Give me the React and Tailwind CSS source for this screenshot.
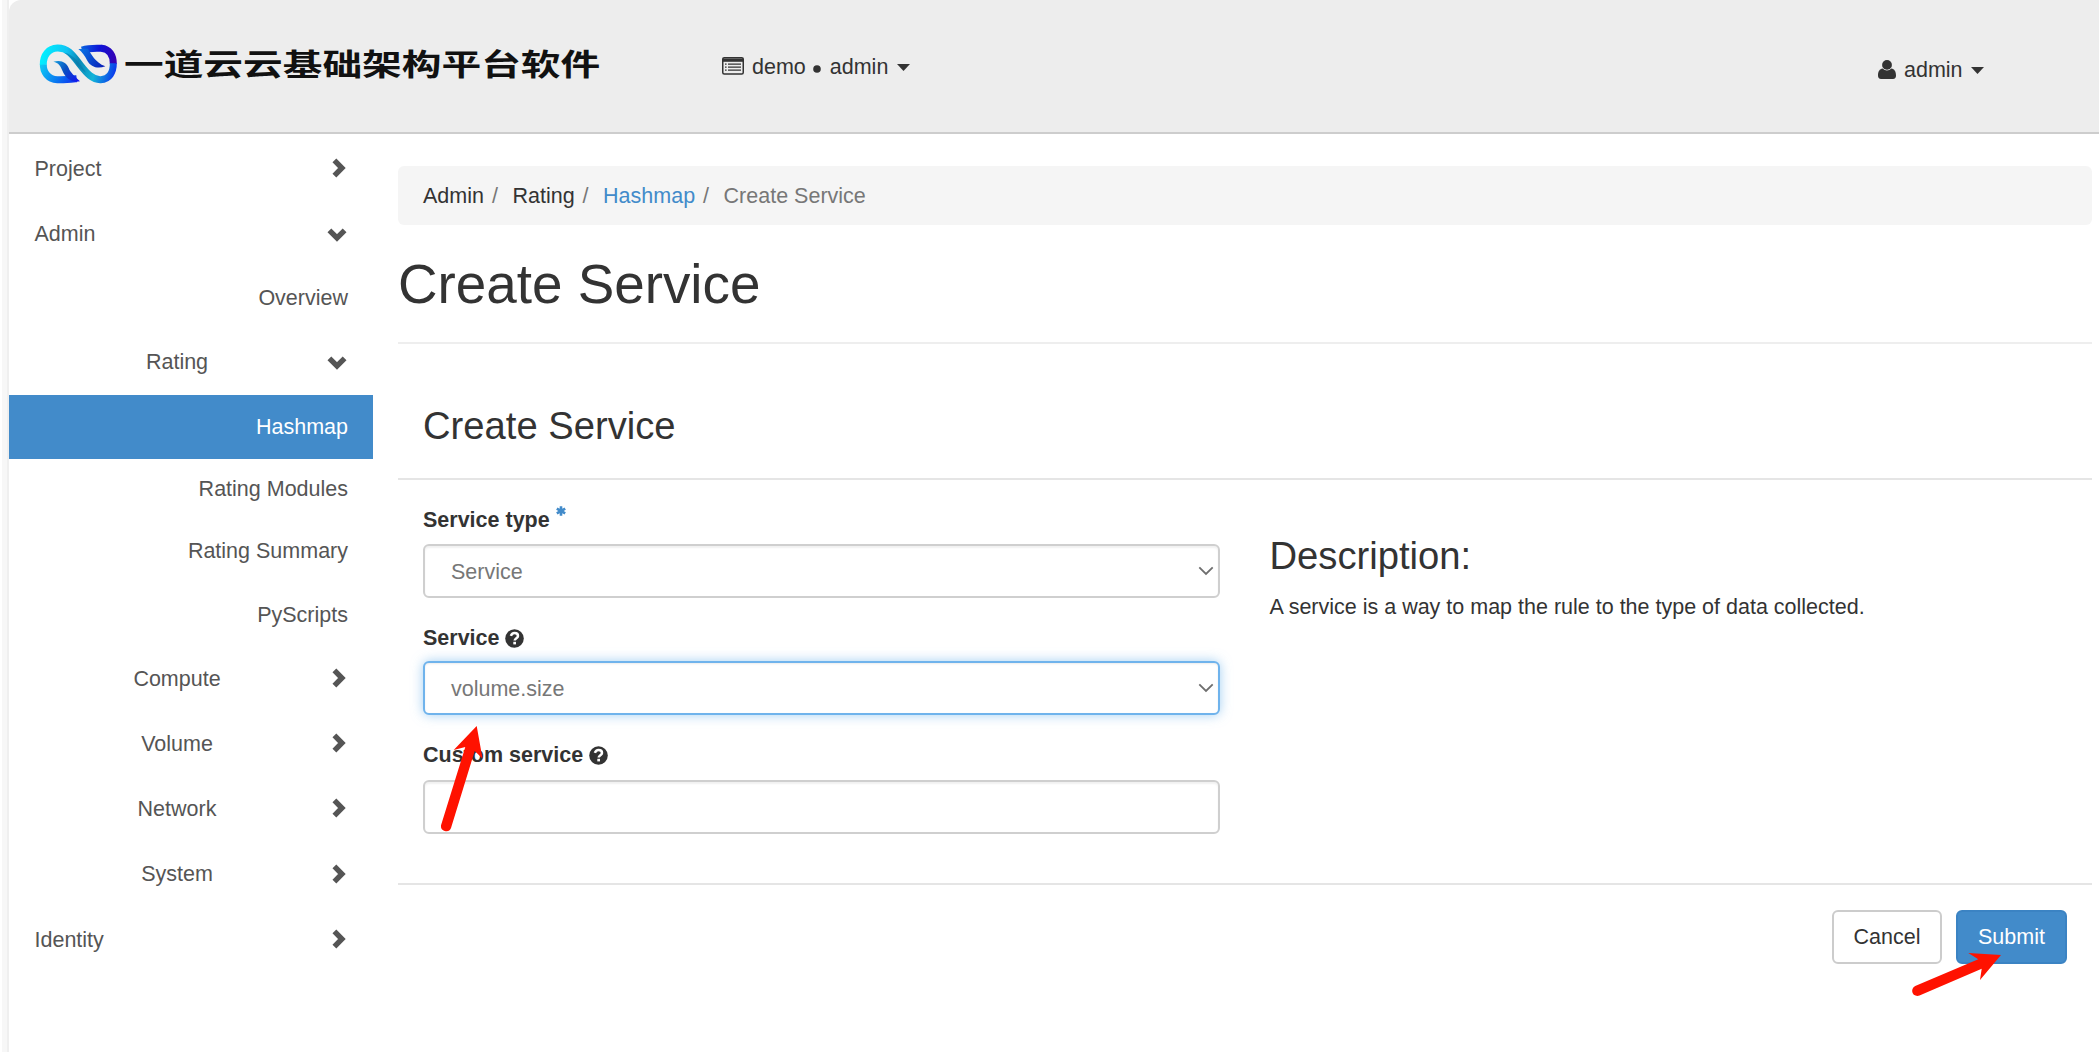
import React from "react";

const NAV = [
  { label: "Project", h: "h-[65px]", align: "left", icon: "right" },
  { label: "Admin", h: "h-[66px]", align: "left", icon: "down" },
  { label: "Overview", h: "h-[61px]", align: "right" },
  { label: "Rating", h: "h-[67px]", align: "center", icon: "down" },
  { label: "Hashmap", h: "h-[64px]", align: "right", active: true },
  { label: "Rating Modules", h: "h-[60px]", align: "right" },
  { label: "Rating Summary", h: "h-[64px]", align: "right" },
  { label: "PyScripts", h: "h-[63px]", align: "right" },
  { label: "Compute", h: "h-[65px]", align: "center", icon: "right" },
  { label: "Volume", h: "h-[65px]", align: "center", icon: "right" },
  { label: "Network", h: "h-[65px]", align: "center", icon: "right" },
  { label: "System", h: "h-[66px]", align: "center", icon: "right" },
  { label: "Identity", h: "h-[65px]", align: "left", icon: "right" },
];

const ALIGN = {
  left: "justify-start pl-[25.5px]",
  right: "justify-end pr-[25px]",
  center: "justify-center pr-[28px]",
};

function Chevron({ dir }) {
  return dir === "right" ? (
    <svg className="absolute right-[27.5px] top-1/2 -mt-[10.5px] h-5 w-[14px]" viewBox="0 0 14 20">
      <path d="M2.4 2.4 L9.9 10 L2.4 17.6" fill="none" stroke="#555" strokeWidth="5.4" />
    </svg>
  ) : (
    <svg className="absolute right-[26.5px] top-1/2 -mt-[6px] h-[14px] w-5" viewBox="0 0 20 14">
      <path d="M2.4 2.4 L10 9.9 L17.6 2.4" fill="none" stroke="#555" strokeWidth="5.4" />
    </svg>
  );
}

function NavItem({ item }) {
  return (
    <li
      className={`relative flex items-center ${item.h} ${ALIGN[item.align]} ${
        item.active ? "bg-[#428bca] text-white" : "text-[#555]"
      }`}
    >
      <span>{item.label}</span>
      {item.icon && <Chevron dir={item.icon} />}
    </li>
  );
}

function Logo() {
  return (
    <svg className="h-12 w-[90px] shrink-0" viewBox="0 0 270 144">
      <defs>
        <linearGradient id="band" gradientUnits="userSpaceOnUse" x1="20" y1="30" x2="245" y2="90">
          <stop offset="0" stopColor="#00f0ff" />
          <stop offset="0.3" stopColor="#10c4f4" />
          <stop offset="0.48" stopColor="#0a86b4" />
          <stop offset="0.72" stopColor="#12b4d8" />
          <stop offset="1" stopColor="#0a30ee" />
        </linearGradient>
        <linearGradient id="lower" gradientUnits="userSpaceOnUse" x1="15" y1="60" x2="130" y2="125">
          <stop offset="0" stopColor="#0cd4f4" />
          <stop offset="0.6" stopColor="#0a6cf0" />
          <stop offset="1" stopColor="#1020f0" />
        </linearGradient>
        <linearGradient id="upper" gradientUnits="userSpaceOnUse" x1="130" y1="30" x2="245" y2="50">
          <stop offset="0" stopColor="#0a6ae0" />
          <stop offset="0.5" stopColor="#0c14d8" />
          <stop offset="1" stopColor="#3c00b0" />
        </linearGradient>
        <linearGradient id="leafL" gradientUnits="userSpaceOnUse" x1="52" y1="62" x2="130" y2="120">
          <stop offset="0" stopColor="#14a0e0" />
          <stop offset="0.45" stopColor="#0a50c0" />
          <stop offset="1" stopColor="#1414f0" />
        </linearGradient>
        <linearGradient id="leafR" gradientUnits="userSpaceOnUse" x1="127" y1="26" x2="212" y2="80">
          <stop offset="0" stopColor="#0a78e8" />
          <stop offset="1" stopColor="#0818b4" />
        </linearGradient>
      </defs>
      <path d="M22 72 C21 96 36 118 64 119 C84 120 102 118 122 116" fill="none" stroke="url(#lower)" strokeWidth="21" />
      <path d="M196 25 C220 27 232 46 232 72" fill="none" stroke="url(#upper)" strokeWidth="21" />
      <path d="M138 30 C158 24 178 24 198 25" fill="none" stroke="url(#upper)" strokeWidth="21" />
      <path
        d="M22 74 C21 46 38 25 64 24 C98 23 112 48 132 74 C152 100 170 120 194 119 C220 118 232 96 232 70"
        fill="none"
        stroke="url(#band)"
        strokeWidth="21"
      />
      <path d="M85 38 C110 42 134 70 150 98 C128 84 112 56 85 38Z" fill="#0878a8" opacity="0.6" />
      <path d="M52 65 C76 58 92 68 98 84 C103 98 116 108 132 124 C104 130 86 110 80 94 C74 78 68 68 52 65Z" fill="url(#leafL)" />
      <path d="M127 27 L156 26 C166 42 176 66 208 79 C184 88 164 80 154 62 C146 46 138 36 127 27Z" fill="url(#leafR)" />
    </svg>
  );
}

function Caret({ className }) {
  return (
    <svg className={`h-[7px] w-[13px] ${className}`} viewBox="0 0 13 7">
      <path d="M0 0H13L6.5 7Z" fill="#333" />
    </svg>
  );
}

function Header() {
  return (
    <header className="flex h-[134px] rounded-tl-[12px] border-b-2 border-[#cdcdcd] bg-[#ededed] text-[#333]">
      <div className="flex w-[713px] items-start pl-[27px] pt-10">
        <Logo />
        <div className="-ml-[2px] -mt-[2px] h-[48px] w-[480px] whitespace-nowrap">
          <span className="block origin-left scale-y-[0.74] font-['Noto_Sans_CJK_SC',sans-serif] text-[39.7px] font-bold leading-[48px] text-[#111]">
            一道云云基础架构平台软件
          </span>
        </div>
      </div>
      <div className="flex h-[25px] flex-1 items-center self-start mt-[55px] leading-[25px]">
        <svg className="-mt-[3px] h-[18px] w-[22px]" viewBox="0 0 22 18">
          <rect x="0.75" y="0.75" width="20.5" height="16.2" rx="1.5" fill="none" stroke="#333" strokeWidth="1.5" />
          <path d="M0.5 1.5 H21.5 V4.8 H0.5Z" fill="#333" />
          <path d="M3 7.2h1.6M3 10.2h1.6M3 13.2h1.6M6 7.2h13M6 10.2h13M6 13.2h13" stroke="#333" strokeWidth="1.3" />
        </svg>
        <span className="ml-[8px]">demo</span>
        <svg className="ml-[7px] mt-[2px] h-2 w-2" viewBox="0 0 8 8">
          <circle cx="4" cy="4" r="3.8" fill="#333" />
        </svg>
        <span className="ml-[9px]">admin</span>
        <Caret className="-mt-[1px] ml-[9px]" />
      </div>
      <div className="flex h-[25px] w-[221px] items-center self-start mt-[58px] leading-[25px]">
        <svg className="-mt-[2px] h-[19px] w-[18px]" viewBox="0 0 18 19">
          <path
            d="M4.6 8.6 C1.6 9 0 11.6 0 15.5 C0 17.6 1 19 3 19 H15 C17 19 18 17.6 18 15.5 C18 11.6 16.4 9 13.4 8.6 C12 9.9 10.6 10.5 9 10.5 C7.4 10.5 6 9.9 4.6 8.6Z"
            fill="#333"
          />
          <circle cx="9" cy="4.9" r="4.9" fill="#333" />
        </svg>
        <span className="ml-[8px]">admin</span>
        <Caret className="-mt-[1px] ml-[8px]" />
      </div>
    </header>
  );
}

function Help() {
  return (
    <svg className="h-[19px] w-[19px]" viewBox="0 0 19 19">
      <circle cx="9.5" cy="9.5" r="9.3" fill="#333" />
      <path d="M5.9 6.9 C6.6 4.6 8 4 9.6 4 C11.6 4 13 5.3 13 6.9 C13 9.2 9.7 9.2 9.7 11.6" fill="none" stroke="#fff" strokeWidth="2.5" />
      <rect x="8.3" y="12.8" width="2.7" height="2.6" fill="#fff" />
    </svg>
  );
}

function Select({ value, focused }) {
  return (
    <div
      className={`flex h-[54px] items-center justify-between rounded-[6px] border-2 bg-white pl-[26px] pr-[4px] text-[#777] ${
        focused
          ? "border-[#6fb3ec] shadow-[inset_0_1px_2px_rgba(0,0,0,0.08),0_0_12px_rgba(102,175,233,0.6)]"
          : "border-[#cfcfcf] shadow-[inset_0_2px_2px_rgba(0,0,0,0.06)]"
      }`}
    >
      <span className="pt-[1px]">{value}</span>
      <svg className="h-[10px] w-4" viewBox="0 0 16 10">
        <path d="M1.3 1.3 L8 8 L14.7 1.3" fill="none" stroke="#6e6e6e" strokeWidth="1.8" />
      </svg>
    </div>
  );
}

function Form() {
  return (
    <div className="w-[797px]">
      <label className="flex h-[24px] items-center font-bold">
        Service type
        <svg className="-mt-[19px] ml-[6px] h-[10px] w-[10px]" viewBox="0 0 10 10">
          <path d="M5 0.2V9.8M0.8 2.6L9.2 7.4M9.2 2.6L0.8 7.4" stroke="#428bca" strokeWidth="2.6" />
        </svg>
      </label>
      <div className="mt-[12px]">
        <Select value="Service" />
      </div>
      <label className="mt-[28px] flex h-[24px] items-center gap-[5px] font-bold">
        Service <Help />
      </label>
      <div className="mt-[11px]">
        <Select value="volume.size" focused />
      </div>
      <label className="mt-[28px] flex h-[24px] items-center gap-[6px] font-bold">
        Custom service <Help />
      </label>
      <div className="mt-[13px] h-[54px] rounded-[6px] border-2 border-[#cfcfcf] bg-white shadow-[inset_0_2px_2px_rgba(0,0,0,0.06)]" />
    </div>
  );
}

function Breadcrumb() {
  return (
    <nav className="flex h-[59px] items-center rounded-[6px] bg-[#f5f5f5] pl-[25px]">
      <span>Admin</span>
      <span className="ml-[8px] text-[#777]">/</span>
      <span className="ml-[14.5px]">Rating</span>
      <span className="ml-[8px] text-[#777]">/</span>
      <span className="ml-[14.5px] text-[#428bca]">Hashmap</span>
      <span className="ml-[8px] text-[#777]">/</span>
      <span className="ml-[14.5px] text-[#777]">Create Service</span>
    </nav>
  );
}

export default function App() {
  return (
    <div className="relative flex h-[1052px] w-[2099px] overflow-hidden bg-white font-['Liberation_Sans',Arial,sans-serif] text-[21.5px] leading-[24px] text-[#333]">
      <div className="ml-[2px] w-[5px] shrink-0 bg-[#f7f7f7]" />
      <div className="w-[2px] shrink-0 bg-[#efefef]" />
      <div className="w-[2090px] shrink-0">
        <Header />
        <div className="flex">
          <ul className="w-[364px] shrink-0 pt-[2px]">
            {NAV.map((item) => (
              <NavItem key={item.label} item={item} />
            ))}
          </ul>
          <main className="ml-[25px] w-[1694px] pt-8">
            <Breadcrumb />
            <h1 className="mt-[28px] h-[62px] text-[54.8px] leading-[62px]">Create Service</h1>
            <div className="mt-[27px] border-b-2 border-[#eee]" />
            <h2 className="mt-[60px] h-[44px] pl-[25px] text-[38.2px] leading-[44px]">Create Service</h2>
            <div className="mt-[30px] border-b-2 border-[#e5e5e5]" />
            <div className="flex pl-[25px] pt-[28px]">
              <Form />
              <section className="ml-[49.5px] pt-[26px]">
                <h3 className="h-[44px] text-[38.2px] leading-[44px]">Description:</h3>
                <p className="mt-[17px]">A service is a way to map the rule to the type of data collected.</p>
              </section>
            </div>
            <div className="mt-[49px] border-b-2 border-[#e5e5e5]" />
            <div className="flex justify-end gap-[14px] pr-[25px] pt-[25px]">
              <button className="h-[54px] w-[110px] rounded-[6px] border-2 border-[#ccc] bg-white">Cancel</button>
              <button className="h-[54px] w-[111px] rounded-[6px] border-2 border-[#3b83c3] bg-[#428bca] text-white">Submit</button>
            </div>
          </main>
        </div>
      </div>
      <svg className="absolute left-[436px] top-[720px] h-[116px] w-[52px]" viewBox="436 720 52 116">
        <path
          d="M476.7 726 L482.5 758.5 L474.7 751 L451 828 A5.2 5.2 0 0 1 441.1 825 L465.3 747 L453.7 750 Z"
          fill="#ff1200"
        />
      </svg>
      <svg className="absolute left-[1908px] top-[948px] h-[54px] w-[98px]" viewBox="1908 948 98 54">
        <path
          d="M2001 955 L1980 980 L1981.7 968.7 L1919.5 995.5 A5.2 5.2 0 0 1 1915.2 986 L1978.3 959.3 L1968.3 953 Z"
          fill="#ff1200"
        />
      </svg>
    </div>
  );
}
